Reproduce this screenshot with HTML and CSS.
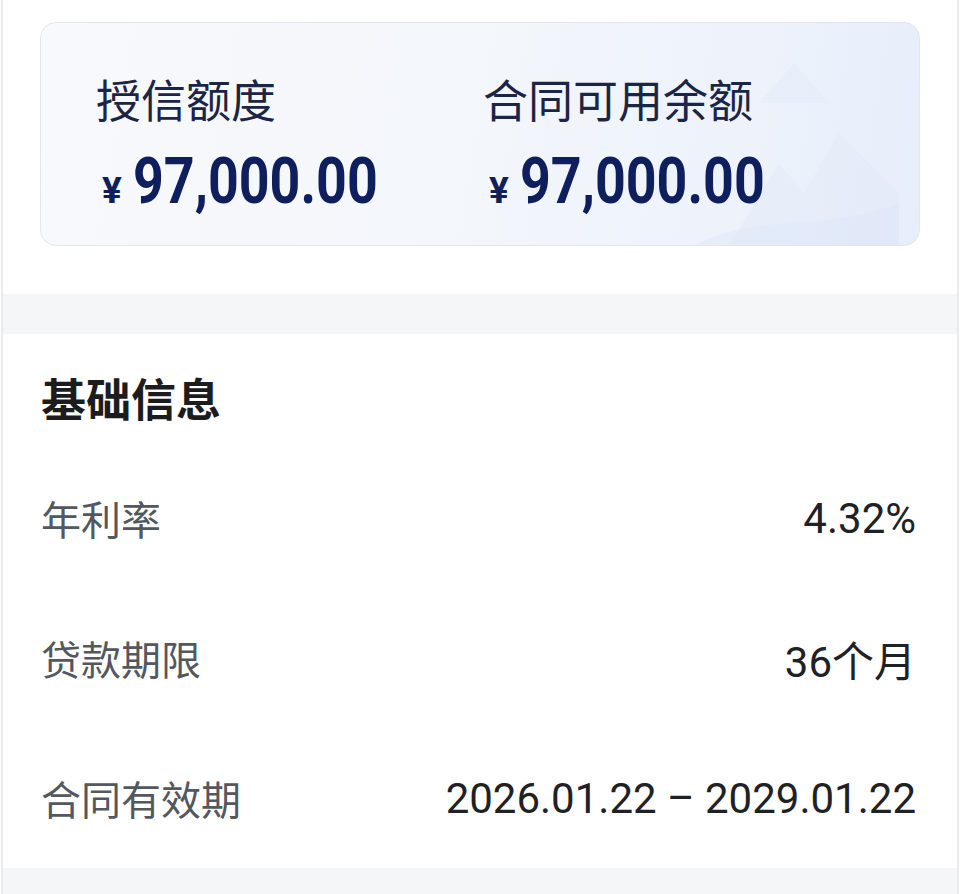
FILE: index.html
```html
<!DOCTYPE html>
<html lang="zh-CN">
<head>
<meta charset="utf-8">
<title>额度信息</title>
<link rel="stylesheet" href="styles.css">
</head>
<body>
<div class="page">
  <section class="top">
    <div class="card">
      <svg class="watermark" viewBox="0 0 200 220" aria-hidden="true">
        <path d="M20 220 L80 120 L105 150 L140 90 L200 150 L200 220 Z" fill="#dfe8f7" opacity="0.35"/>
        <path d="M60 60 L95 20 L130 60 Z" fill="#e3ebf8" opacity="0.4"/>
        <path d="M0 200 C60 170 120 190 200 160 L200 220 L0 220 Z" fill="#dbe6f8" opacity="0.35"/>
      </svg>
      <div class="col">
        <div class="label">授信额度</div>
        <div class="amount"><span class="yen">¥</span><span class="num">97,000.00</span></div>
      </div>
      <div class="col">
        <div class="label">合同可用余额</div>
        <div class="amount"><span class="yen">¥</span><span class="num">97,000.00</span></div>
      </div>
    </div>
  </section>
  <div class="gap"></div>
  <section class="info">
    <h2 class="title">基础信息</h2>
    <div class="row"><span class="key">年利率</span><span class="val">4.32%</span></div>
    <div class="row"><span class="key">贷款期限</span><span class="val">36个月</span></div>
    <div class="row"><span class="key">合同有效期</span><span class="val">2026.01.22 – 2029.01.22</span></div>
  </section>
  <div class="gap bottom"></div>
</div>
</body>
</html>
```
FILE: styles.css
```css
* { box-sizing: border-box; }
html, body {
  margin: 0;
  padding: 0;
  background: #ffffff;
}
body {
  font-family: Roboto, "Noto Sans CJK SC", sans-serif;
}
.page {
  width: 958px;
  min-height: 894px;
  margin-left: 1px;
  border-left: 2px solid #ececee;
  border-right: 2px solid #ececee;
  background: #ffffff;
}
.top {
  padding: 22px 37px 48px 37px;
}
.card {
  position: relative;
  overflow: hidden;
  height: 224px;
  border: 1px solid #e2e7ef;
  border-radius: 16px;
  background: linear-gradient(100deg, #f7f9fc 0%, #f4f7fb 45%, #edf2fb 80%, #e6eefb 100%);
  display: grid;
  grid-template-columns: 387px 1fr;
  padding: 48px 0 0 55px;
}
.watermark {
  position: absolute;
  right: 20px;
  top: 20px;
  width: 200px;
  height: 220px;
}
.col {
  position: relative;
  display: flex;
  flex-direction: column;
  gap: 20px;
}
.label {
  font-family: "Noto Sans CJK SC", sans-serif;
  font-size: 45px;
  line-height: 56px;
  color: #1b2546;
  font-weight: 400;
}
.amount {
  height: 70px;
  display: flex;
  align-items: baseline;
  color: #0f1f5e;
  padding-left: 6px;
}
.yen {
  font-family: Roboto, sans-serif;
  font-weight: 700;
  font-size: 37px;
  line-height: 70px;
  margin-right: 11px;
}
.num {
  display: inline-block;
  font-family: Roboto, sans-serif;
  font-weight: 700;
  font-size: 64px;
  line-height: 70px;
  letter-spacing: 0px;
  transform: scaleX(0.84);
  transform-origin: left center;
}
.gap {
  height: 40px;
  background: #f5f6f8;
}
.gap.bottom {
  height: 26px;
}
.info {
  padding: 34px 41px 0 38px;
}
.title {
  margin: 0 0 20px 0;
  font-family: "Noto Sans CJK SC", sans-serif;
  font-size: 45px;
  line-height: 60px;
  font-weight: 700;
  color: #1c1c1e;
}
.row {
  height: 140px;
  display: flex;
  align-items: center;
  justify-content: space-between;
}
.key {
  font-family: "Noto Sans CJK SC", sans-serif;
  font-size: 40px;
  color: #53575e;
}
.val {
  font-family: Roboto, "Noto Sans CJK SC", sans-serif;
  font-size: 42px;
  color: #202124;
}
```
